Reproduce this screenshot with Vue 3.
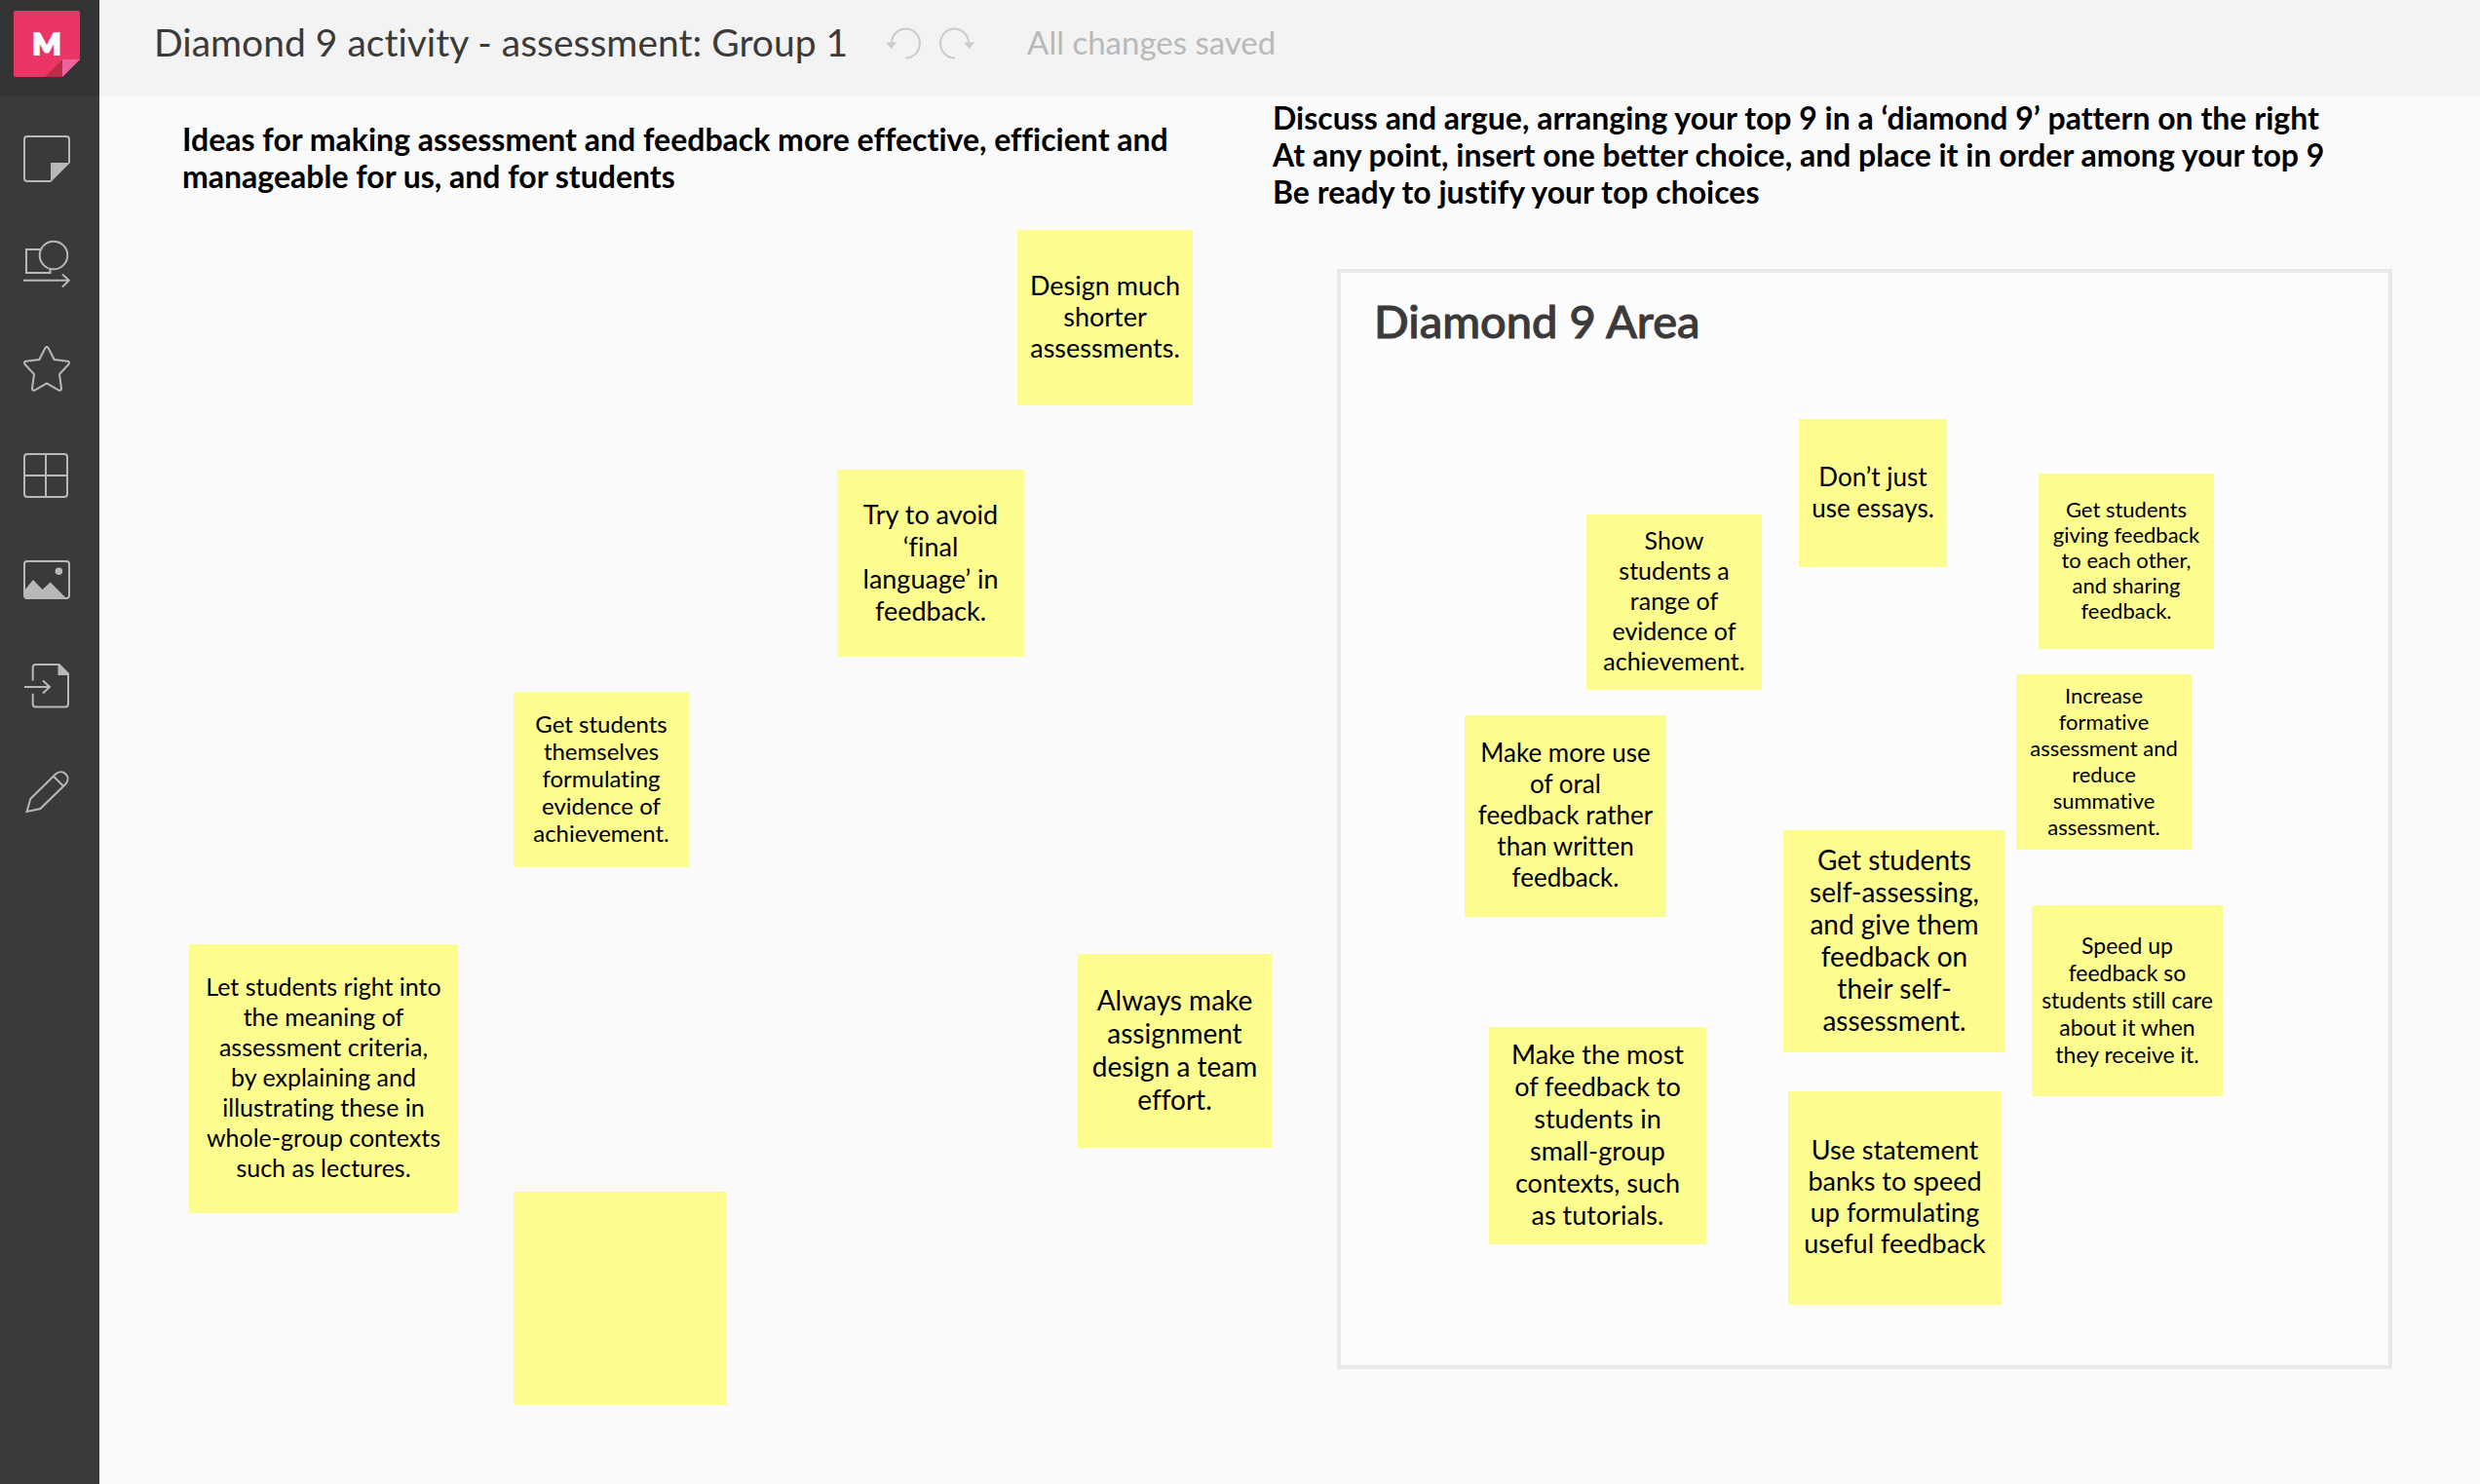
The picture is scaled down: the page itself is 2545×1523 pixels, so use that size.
<script setup>
const notes = [
  { x: 942, y: 137, size: 180, font: 27, line: 32, text: ['Design much', 'shorter', 'assessments.'] },
  { x: 757, y: 383, size: 192, font: 27, line: 33, text: ['Try to avoid', '‘final', 'language’ in', 'feedback.'] },
  { x: 425, y: 611, size: 180, font: 24, line: 28, text: ['Get students', 'themselves', 'formulating', 'evidence of', 'achievement.'] },
  { x: 92, y: 870, size: 276, font: 25, line: 31, text: ['Let students right into', 'the meaning of', 'assessment criteria,', 'by explaining and', 'illustrating these in', 'whole-group contexts', 'such as lectures.'] },
  { x: 1004, y: 880, size: 199, font: 28, line: 34, text: ['Always make', 'assignment', 'design a team', 'effort.'] },
  { x: 425, y: 1124, size: 219, font: 27, line: 33, text: [] },
  { x: 1526, y: 429, size: 180, font: 25, line: 31, text: ['Show', 'students a', 'range of', 'evidence of', 'achievement.'] },
  { x: 1744, y: 331, size: 152, font: 26, line: 32, text: ['Don’t just', 'use essays.'] },
  { x: 1990, y: 387, size: 180, font: 22, line: 26, text: ['Get students', 'giving feedback', 'to each other,', 'and sharing', 'feedback.'] },
  { x: 1967, y: 593, size: 180, font: 22, line: 27, text: ['Increase', 'formative', 'assessment and', 'reduce', 'summative', 'assessment.'] },
  { x: 1401, y: 635, size: 207, font: 26, line: 32, text: ['Make more use', 'of oral', 'feedback rather', 'than written', 'feedback.'] },
  { x: 1728, y: 753, size: 228, font: 28, line: 33, text: ['Get students', 'self-assessing,', 'and give them', 'feedback on', 'their self-', 'assessment.'] },
  { x: 1983, y: 830, size: 196, font: 23, line: 28, text: ['Speed up', 'feedback so', 'students still care', 'about it when', 'they receive it.'] },
  { x: 1426, y: 955, size: 223, font: 27, line: 33, text: ['Make the most', 'of feedback to', 'students in', 'small-group', 'contexts, such', 'as tutorials.'] },
  { x: 1733, y: 1021, size: 219, font: 27, line: 32, text: ['Use statement', 'banks to speed', 'up formulating', 'useful feedback'] },
]

const noteStyle = (n) => ({
  left: `${n.x}px`,
  top: `${n.y}px`,
  width: `${n.size}px`,
  height: `${n.size}px`,
  fontSize: `${n.font}px`,
  lineHeight: `${n.line}px`,
})
</script>

<template>
  <div class="app">
    <aside class="sidebar">
      <a class="home" href="#" aria-label="Home">
        <svg width="68" height="68" viewBox="0 0 68 68">
          <path d="M2 0H66Q68 0 68 2V50L50 68H2Q0 68 0 66V2Q0 0 2 0Z" fill="#eb3565" />
          <path d="M32 68L50 50V68Z" fill="#bf2a47" />
          <path d="M50 50H68L50 68Z" fill="#eb64a0" />
          <text class="mark" x="34" y="45" text-anchor="middle">M</text>
        </svg>
      </a>
      <nav class="tools">
        <button class="tool" aria-label="Sticky notes">
          <svg viewBox="0 0 48 48">
            <path d="M28 47H4Q1 47 1 44V4Q1 1 4 1H44Q47 1 47 4V28" />
            <path class="solid" d="M28 28H48L28 48Z" />
          </svg>
        </button>
        <button class="tool" aria-label="Shapes and connectors">
          <svg viewBox="0 0 48 48">
            <path d="M17.500 9H3V33H27.500V29M0 40.700H46.500M40 34.500L46.800 40.700L40 47.500" />
            <circle cx="31" cy="15" r="14.300" />
          </svg>
        </button>
        <button class="tool" aria-label="Icons">
          <svg viewBox="0 0 48 48">
            <path d="M22.500 2Q24 0 25.500 2L31.700 14L45.500 15.800Q48 16.500 46.500 18.800L37 29L39 43.500Q39 46.500 36.500 45.500L24 38.500L11.500 45.500Q9 46.500 9 43.500L11 29L1.500 18.800Q0 16.500 2.500 15.800L16.300 14Z" />
          </svg>
        </button>
        <button class="tool" aria-label="Frameworks">
          <svg viewBox="0 0 48 48">
            <rect x="1" y="3" width="44" height="44" rx="3" />
            <path d="M23 3V47M1 25H45" />
          </svg>
        </button>
        <button class="tool" aria-label="Images">
          <svg viewBox="0 0 48 48">
            <rect x="1" y="5" width="46" height="38" rx="3" />
            <circle class="solid" cx="36.400" cy="15.300" r="3.800" />
            <path class="solid" d="M1 35L10 24L19.500 34L27.700 26.500L45 44H4Q1 44 1 41Z" />
          </svg>
        </button>
        <button class="tool" aria-label="Import">
          <svg viewBox="0 0 48 48">
            <path d="M9.700 19.500V6Q9.700 3 12.700 3H36M46 13V43.500Q46 46.500 43 46.500H12.700Q9.700 46.500 9.700 43.500V32.700M1 26H26.500M20 19.500L27 26L20 32.500" />
            <path class="solid" d="M35.500 2H37L47 12V14H35.500Z" />
          </svg>
        </button>
        <button class="tool" aria-label="Draw">
          <svg viewBox="0 0 48 48">
            <path d="M3.500 46L7.300 32.700L33 7.500C40 1 50 10 43.500 17.500L17.300 43ZM31 9.700L41 19.700" />
          </svg>
        </button>
      </nav>
    </aside>

    <div class="main">
      <header class="topbar">
        <h1 class="title">Diamond 9 activity - assessment: Group 1</h1>
        <div class="history">
          <button class="step" aria-label="Undo">
            <svg viewBox="0 0 36 36">
              <path d="M6 18.500A14.500 15 0 1 1 20 34.500" />
              <path class="head" d="M0 18.500H11L5.500 25Z" />
            </svg>
          </button>
          <button class="step" aria-label="Redo">
            <svg viewBox="0 0 36 36">
              <path d="M30 18.500A14.500 15 0 1 0 16 34.500" />
              <path class="head" d="M36 18.500H25L30.500 25Z" />
            </svg>
          </button>
        </div>
        <span class="status">All changes saved</span>
      </header>

      <main class="board">
        <h2 class="heading ideas">Ideas for making assessment and feedback more effective, efficient and<br>manageable for us, and for students</h2>
        <h2 class="heading discuss">Discuss and argue, arranging your top 9 in a ‘diamond 9’ pattern on the right<br>At any point, insert one better choice, and place it in order among your top 9<br>Be ready to justify your top choices</h2>
        <section class="area">
          <h3 class="area-title">Diamond 9 Area</h3>
        </section>
        <article v-for="(note, i) in notes" :key="i" class="note" :style="noteStyle(note)">
          <div v-for="(row, j) in note.text" :key="j">{{ row }}</div>
        </article>
      </main>
    </div>
  </div>
</template>

<style>
body {
  margin: 0;
  background: #fafafa;
}
</style>

<style scoped>
.app {
  display: flex;
  min-height: 100vh;
  font-family: Lato, "Open Sans", sans-serif;
  font-variant-ligatures: none;
  background: #fafafa;
  overflow: hidden;
}

.sidebar {
  flex: none;
  width: 102px;
  background: #3a3a3a;
}

.home {
  display: block;
  height: 99px;
  padding: 11px 0 0 14px;
  box-sizing: border-box;
  background: #343434;
}

.home svg {
  display: block;
}

.mark {
  font-size: 31px;
  font-weight: 900;
  fill: #fff;
  stroke: #fff;
  stroke-width: 2;
}

.tools {
  display: flex;
  flex-direction: column;
  padding-top: 10px;
}

.tool,
.step {
  margin: 0;
  border: 0;
  background: none;
  cursor: pointer;
}

.tool {
  height: 108px;
  padding: 0 0 0 24px;
}

.tool svg {
  display: block;
  width: 48px;
  height: 48px;
  overflow: visible;
  fill: none;
  stroke: #b8b8b8;
  stroke-width: 2;
}

.tool .solid {
  fill: #b8b8b8;
  stroke: none;
}

.main {
  flex: 1;
  display: flex;
  flex-direction: column;
  min-width: 0;
}

.topbar {
  display: flex;
  align-items: center;
  height: 99px;
  box-sizing: border-box;
  padding: 0 56px 14px;
  background: #f3f3f3;
}

.title {
  margin: 0;
  font-size: 39px;
  font-weight: 400;
  line-height: 48px;
  color: #3a3a3a;
  white-space: nowrap;
}

.history {
  display: flex;
  gap: 19px;
  margin: 0 54px 0 39px;
}

.step {
  padding: 0;
}

.step svg {
  display: block;
  width: 36px;
  height: 36px;
  overflow: visible;
  fill: none;
  stroke: #cbcbcb;
  stroke-width: 2;
}

.step .head {
  fill: #cbcbcb;
  stroke: none;
}

.status {
  font-size: 33px;
  line-height: 40px;
  color: #b9b9b9;
  white-space: nowrap;
}

.board {
  position: relative;
  flex: 1;
}

.heading {
  position: absolute;
  margin: 0;
  font-size: 32px;
  font-weight: 700;
  line-height: 38px;
  color: #000;
  white-space: nowrap;
}

.ideas {
  left: 85px;
  top: 25px;
}

.discuss {
  left: 1204px;
  top: 3px;
}

.area {
  position: absolute;
  left: 1270px;
  top: 177px;
  width: 1083px;
  height: 1129px;
  box-sizing: border-box;
  border: 4px solid #e9e9e9;
  padding: 21px 34px;
  background: #fcfcfc;
}

.area-title {
  margin: 0;
  font-size: 47px;
  font-weight: 500;
  line-height: 56px;
  color: #3a3a3a;
  -webkit-text-stroke: 1px #3a3a3a;
}

.note {
  position: absolute;
  display: flex;
  flex-direction: column;
  justify-content: center;
  box-sizing: border-box;
  padding-bottom: 3px;
  text-align: center;
  white-space: nowrap;
  color: #000;
  background: #fdfc8f;
}
</style>
